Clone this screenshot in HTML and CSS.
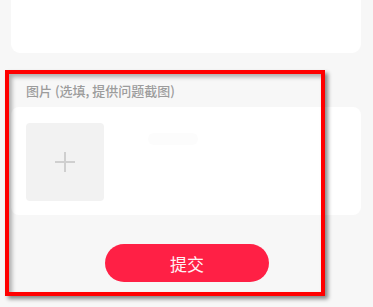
FILE: index.html
```html
<!DOCTYPE html>
<html lang="zh">
<head>
<meta charset="utf-8">
<link rel="stylesheet" href="styles.css">
</head>
<body>
<div class="page">
  <div class="card card-top"></div>
  <div class="label">图片 (选填, 提供问题截图)</div>
  <div class="card card-photos">
    <div class="upload">
      <svg width="22" height="22" viewBox="0 0 22 22"><path d="M11 1v20M1 11h20" stroke="#cfcfcf" stroke-width="2" fill="none"/></svg>
    </div>
    <div class="ghost"></div>
  </div>
  <div class="actions">
    <button class="submit">提交</button>
  </div>
  <div class="annot"></div>
</div>
</body>
</html>
```
FILE: styles.css
```css
* { box-sizing: border-box; }
html, body { margin: 0; padding: 0; }
body {
  background: #f7f7f7;
  font-family: "Noto Sans CJK SC", "Noto Sans", sans-serif;
  width: 373px;
  height: 307px;
  overflow: hidden;
}
.page { position: relative; height: 307px; }
.card {
  background: #fff;
  margin: 0 12px 0 11px;
}
.card-top {
  height: 53px;
  border-radius: 0 0 9px 9px;
}
.label {
  margin: 29px 0 0 26px;
  font-size: 13px;
  line-height: 17px;
  font-weight: 500;
  color: #9c9c9c;
}
.card-photos {
  margin-top: 8px;
  height: 108px;
  border-radius: 8px;
  padding: 16px 15px;
  display: flex;
  align-items: flex-start;
}
.upload {
  width: 78px;
  height: 78px;
  background: #f2f2f2;
  border-radius: 4px;
  display: flex;
  align-items: center;
  justify-content: center;
}
.ghost {
  width: 50px;
  height: 12px;
  margin: 10px 0 0 44px;
  background: #fcfcfc;
  border-radius: 6px;
}
.actions {
  display: flex;
  justify-content: center;
  margin-top: 29px;
}
.submit {
  width: 164px;
  height: 38px;
  border: none;
  border-radius: 19px;
  background: #ff2045;
  color: #fff2f4;
  font-family: "Noto Sans CJK SC", sans-serif;
  font-size: 17px;
  padding: 0;
  margin-left: 1px;
}
.annot {
  position: absolute;
  left: 5px;
  top: 70px;
  width: 320px;
  height: 226px;
  border: 4px solid #ff0000;
  box-shadow: 3px 3px 4px rgba(0,0,0,0.45), inset 3px 3px 4px rgba(0,0,0,0.3);
}
```
